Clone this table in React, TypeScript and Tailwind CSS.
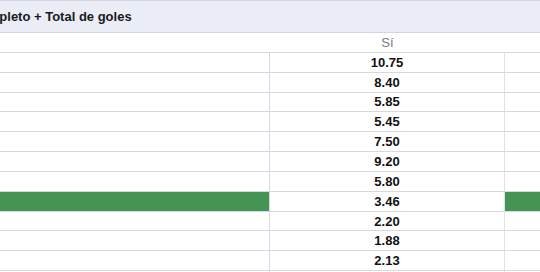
const rows = [
  { v: '10.75' },
  { v: '8.40' },
  { v: '5.85' },
  { v: '5.45' },
  { v: '7.50' },
  { v: '9.20' },
  { v: '5.80' },
  { v: '3.46', hit: true },
  { v: '2.20' },
  { v: '1.88' },
  { v: '2.13' },
];

export default function App() {
  return (
    <div className="w-[540px] h-[272px] overflow-hidden bg-white font-['Liberation_Sans',Arial,sans-serif] text-[13px]">
      {/* title bar */}
      <div className="h-[33px] border-t border-b border-[#d3d6e2] bg-[#eaedf6] flex items-center overflow-hidden whitespace-nowrap">
        <span className="ml-[-77px] font-bold text-[#1a1a1a]">Tiempo completo + Total de goles</span>
      </div>

      {/* sub header */}
      <div className="grid grid-cols-[270px_235px_1fr] h-[19.85px] border-b border-[#d6d9e4]">
        <div />
        <div className="flex items-center justify-center text-[#7a7a7a] leading-none">Sí</div>
        <div />
      </div>

      {rows.map((r, i) => (
        <div key={i} className="grid grid-cols-[270px_235px_1fr] h-[19.85px] border-b border-[#d6d9e4]">
          <div className={`border-r border-[#d6d9e4] ${r.hit ? 'bg-[#449454]' : ''}`} />
          <div className="border-r border-[#dfe2ea] flex items-center justify-center font-bold text-[#111] leading-none">
            {r.v}
          </div>
          <div className={r.hit ? 'bg-[#449454]' : ''} />
        </div>
      ))}
      <div className="grid grid-cols-[270px_235px_1fr] h-[20px]">
        <div className="border-r border-[#d6d9e4]" />
        <div className="border-r border-[#dfe2ea]" />
        <div />
      </div>
    </div>
  );
}
